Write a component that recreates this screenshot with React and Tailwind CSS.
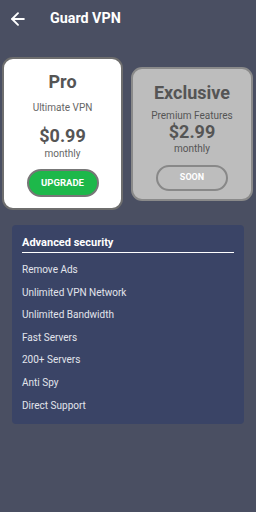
import { ArrowLeft } from 'lucide-react';

const FEATURES = [
  'Remove Ads',
  'Unlimited VPN Network',
  'Unlimited Bandwidth',
  'Fast Servers',
  '200+ Servers',
  'Anti Spy',
  'Direct Support',
];

export default function App() {
  return (
    <div className="w-[256px] h-[512px] bg-[#4a4f62] font-['Roboto',sans-serif] overflow-hidden">
      {/* header */}
      <header className="h-[37px] flex items-center pl-[8px]">
        <ArrowLeft className="w-[20px] h-[20px] text-white" strokeWidth={2.3} />
        <h1 className="ml-[22px] text-[14.3px] font-bold text-white">Guard VPN</h1>
      </header>

      {/* plans */}
      <div className="flex items-center gap-[8px] px-[2px] mt-[20px]">
        <div className="w-[121px] h-[153px] bg-white border-2 border-[#6e6e6e] rounded-[11px] flex flex-col items-center">
          <p className="mt-[12px] text-[18px] font-bold text-[#555] leading-[22px]">Pro</p>
          <p className="mt-[9px] text-[10px] text-[#666] leading-[12px]">Ultimate VPN</p>
          <p className="mt-[11px] text-[18px] font-bold text-[#555] leading-[22px]">$0.99</p>
          <p className="mt-[1px] text-[10px] text-[#666] leading-[12px]">monthly</p>
          <button className="mt-[9px] w-[72px] h-[28px] rounded-full bg-[#1db84a] border-2 border-[#777] text-white text-[9.5px] font-bold">
            UPGRADE
          </button>
        </div>
        <div className="w-[122px] h-[134px] bg-[#bdbdbd] border-2 border-[#8a8a8a] rounded-[11px] flex flex-col items-center">
          <p className="mt-[13px] text-[18px] font-bold text-[#555] leading-[22px]">Exclusive</p>
          <p className="mt-[6px] text-[10px] text-[#555] leading-[12px]">Premium Features</p>
          <p className="text-[18px] font-bold text-[#555] leading-[20px]">$2.99</p>
          <p className="mt-[1px] text-[10px] text-[#555] leading-[12px]">monthly</p>
          <button className="mt-[10px] w-[72px] h-[26px] rounded-full border-2 border-[#888] text-white text-[9px] font-bold">
            SOON
          </button>
        </div>
      </div>

      {/* features */}
      <div className="mx-[12px] mt-[15px] h-[199px] bg-[#3a4466] rounded-[4px] px-[10px] pt-[11px]">
        <p className="text-[11px] font-bold text-white leading-[14px]">Advanced security</p>
        <div className="mt-[2px] h-px bg-white" />
        <ul className="mt-[10px] flex flex-col">
          {FEATURES.map((f) => (
            <li key={f} className="h-[22.6px] text-[10px] text-[#e2e4ec] leading-[14px]">{f}</li>
          ))}
        </ul>
      </div>
    </div>
  );
}
